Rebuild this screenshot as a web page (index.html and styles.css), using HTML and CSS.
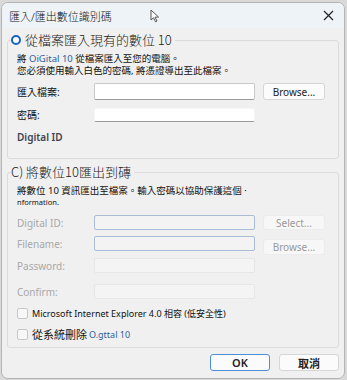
FILE: index.html
```html
<!DOCTYPE html>
<html lang="zh-Hant">
<head>
  <meta charset="UTF-8">
  <meta name="viewport" content="width=device-width, initial-scale=1.0">
  <title>匯入/匯出數位識別碼</title>
  <link rel="stylesheet" href="styles.css">
</head>
<body>
  <div class="window">
    <div class="titlebar">
      <span class="title">匯入/匯出數位識別碼</span>
      <svg class="cursor" width="10" height="14" viewBox="0 0 10 14">
        <path d="M1 1 L1 11 L3.5 8.8 L5.5 12.8 L7 12 L5 8.2 L8.5 8 Z" fill="#fff" stroke="#555" stroke-width="1"/>
      </svg>
      <svg class="close" width="11" height="11" viewBox="0 0 11 11">
        <path d="M1 1 L10 10 M10 1 L1 10" stroke="#222" stroke-width="1.2"/>
      </svg>
    </div>

    <div class="content">
      <fieldset class="group group-import">
        <legend class="big"><span class="radio on"></span><span>從檔案匯入現有的數位 10</span></legend>
        <p class="desc first">將 <span class="blue">OiGital 10</span> 從檔案匯入至您的電腦。</p>
        <p class="desc">您必須使用輸入白色的密碼, 將憑證導出至此檔案。</p>

        <div class="row r-file">
          <label>匯入檔案:</label>
          <div class="input"></div>
          <button class="btn">Browse...</button>
        </div>
        <div class="row r-pass">
          <label>密碼:</label>
          <div class="input flat"></div>
        </div>
        <p class="sub">Digital ID</p>
      </fieldset>

      <fieldset class="group group-export">
        <legend class="big"><span>C) 將數位10匯出到磚</span></legend>
        <p class="desc first">將數位 10 資訊匯出至檔案。輸入密碼以協助保護這個 ·</p>
        <p class="desc tiny">nformation.</p>

        <div class="row dim r-id">
          <label>Digital ID:</label>
          <div class="input sel"></div>
          <button class="btn off">Select...</button>
        </div>
        <div class="row dim r-name">
          <label>Filename:</label>
          <div class="input sel"></div>
          <button class="btn off low">Browse...</button>
        </div>
        <div class="row dim r-pw">
          <label>Password:</label>
          <div class="input faint"></div>
        </div>
        <div class="row dim r-conf">
          <label>Confirm:</label>
          <div class="input faint"></div>
        </div>

        <div class="check c1"><span class="box"></span>Microsoft Internet Explorer 4.0 相容 (低安全性)</div>
        <div class="check c2"><span class="box"></span><span class="cjk">從系統刪除</span> <span class="blue">O.gttal 10</span></div>
      </fieldset>

      <div class="actions">
        <button class="btn big-btn ok">OK</button>
        <button class="btn big-btn">取消</button>
      </div>
    </div>
  </div>
</body>
</html>
```

FILE: styles.css
```css
body {
  margin: 0;
  width: 347px;
  height: 380px;
  background: #d9d9d9;
  font-family: "Noto Sans", "Noto Sans CJK TC", sans-serif;
  overflow: hidden;
}
.window {
  margin: 2px 2px 0 1px;
  width: 342px;
  height: 375px;
  border: 1px solid #b4b4b4;
  border-radius: 7px;
  background: #f0f0f0;
  overflow: hidden;
}
.titlebar {
  height: 25px;
  background: #eef3f8;
  display: flex;
  align-items: center;
  position: relative;
}
.title {
  margin-left: 7px;
  font-size: 11px;
  font-weight: 300;
  color: #111;
}
.cursor {
  position: absolute;
  left: 148px;
  top: 6px;
}
.close {
  margin-left: auto;
  margin-right: 10px;
}
.content {
  padding: 2px 5px 0 5px;
}
.group {
  margin: 0;
  padding: 0 8px 0 9px;
  border: 1px solid #dadada;
  border-radius: 3px;
  width: 332px;
  box-sizing: border-box;
}
.group-import {
  height: 129px;
}
.group-export {
  height: 186px;
  margin-top: 3px;
}
legend.big {
  margin-left: -6px;
  padding: 0 3px 0 0;
  font-family: "Noto Sans CJK TC", sans-serif;
  font-size: 13px;
  font-weight: 300;
  line-height: 20px;
  color: #1a1a1a;
  display: flex;
  align-items: center;
}
.radio {
  width: 6px;
  height: 6px;
  border: 2.5px solid #1a62c4;
  border-radius: 50%;
  background: #fff;
  margin-right: 4px;
}
.desc {
  margin: 0;
  font-size: 9.5px;
  line-height: 12px;
  color: #111;
}
.desc.first {
  margin-top: 3px;
}
.desc.tiny {
  font-size: 7.5px;
  line-height: 10px;
}
.blue {
  color: #2d5d9c;
}
.row {
  display: grid;
  grid-template-columns: 69px 161px 62px;
  column-gap: 8px;
  align-items: center;
}
.row label {
  font-size: 10px;
  color: #111;
}
.row.dim label {
  color: #a8a8a8;
}
.input {
  height: 15px;
  background: #fff;
  border: 1px solid #c9c9c9;
  border-bottom-color: #9a9a9a;
  border-radius: 2px;
}
.input.flat {
  border-color: #f5f5f5;
  border-bottom-color: #9a9a9a;
}
.input.sel {
  background: #f3f3f3;
  border: 1px solid #a8bcd6;
}
.input.faint {
  background: #f4f4f4;
  border: 1px solid #e6e6e6;
}
.btn {
  height: 17px;
  padding: 0;
  font-family: "Noto Sans", "Noto Sans CJK TC", sans-serif;
  font-size: 10px;
  color: #222;
  background: #fbfbfb;
  border: 1px solid #d6d6d6;
  border-radius: 3px;
}
.btn.off {
  color: #999;
  background: #f7f7f7;
  border-color: #ececec;
  height: 15px;
}
.btn.low {
  align-self: end;
  height: 16px;
  margin-bottom: -4px;
}
.r-file {
  margin-top: 6px;
}
.r-file .input {
  height: 15px;
}
.r-pass {
  margin-top: 7px;
}
.r-pass .input {
  height: 12px;
}
.sub {
  margin: 8px 0 0;
  font-size: 10px;
  color: #3b4450;
  font-weight: 600;
}
.r-id {
  margin-top: 8px;
}
.r-id .input, .r-name .input, .r-pw .input, .r-conf .input {
  height: 13px;
}
.r-name {
  margin-top: 6px;
}
.r-pw {
  margin-top: 7px;
}
.r-conf {
  margin-top: 11px;
}
.check {
  display: flex;
  align-items: center;
  font-size: 9px;
  color: #111;
}
.c1 {
  margin-top: 8px;
}
.c2 {
  margin-top: 6px;
  font-size: 9px;
}
.cjk {
  font-size: 11px;
  margin-right: 2px;
}
.box {
  width: 9px;
  height: 9px;
  border: 1px solid #c8c8c8;
  border-radius: 2px;
  background: #f7f7f7;
  margin-right: 4px;
}
.actions {
  display: flex;
  justify-content: flex-end;
  gap: 9px;
  margin-top: 6px;
  padding-right: 0;
}
.big-btn {
  width: 60px;
  height: 17px;
  font-size: 11px;
  font-weight: 600;
}
.ok {
  border: 1px solid #4a8fd8;
}
```
